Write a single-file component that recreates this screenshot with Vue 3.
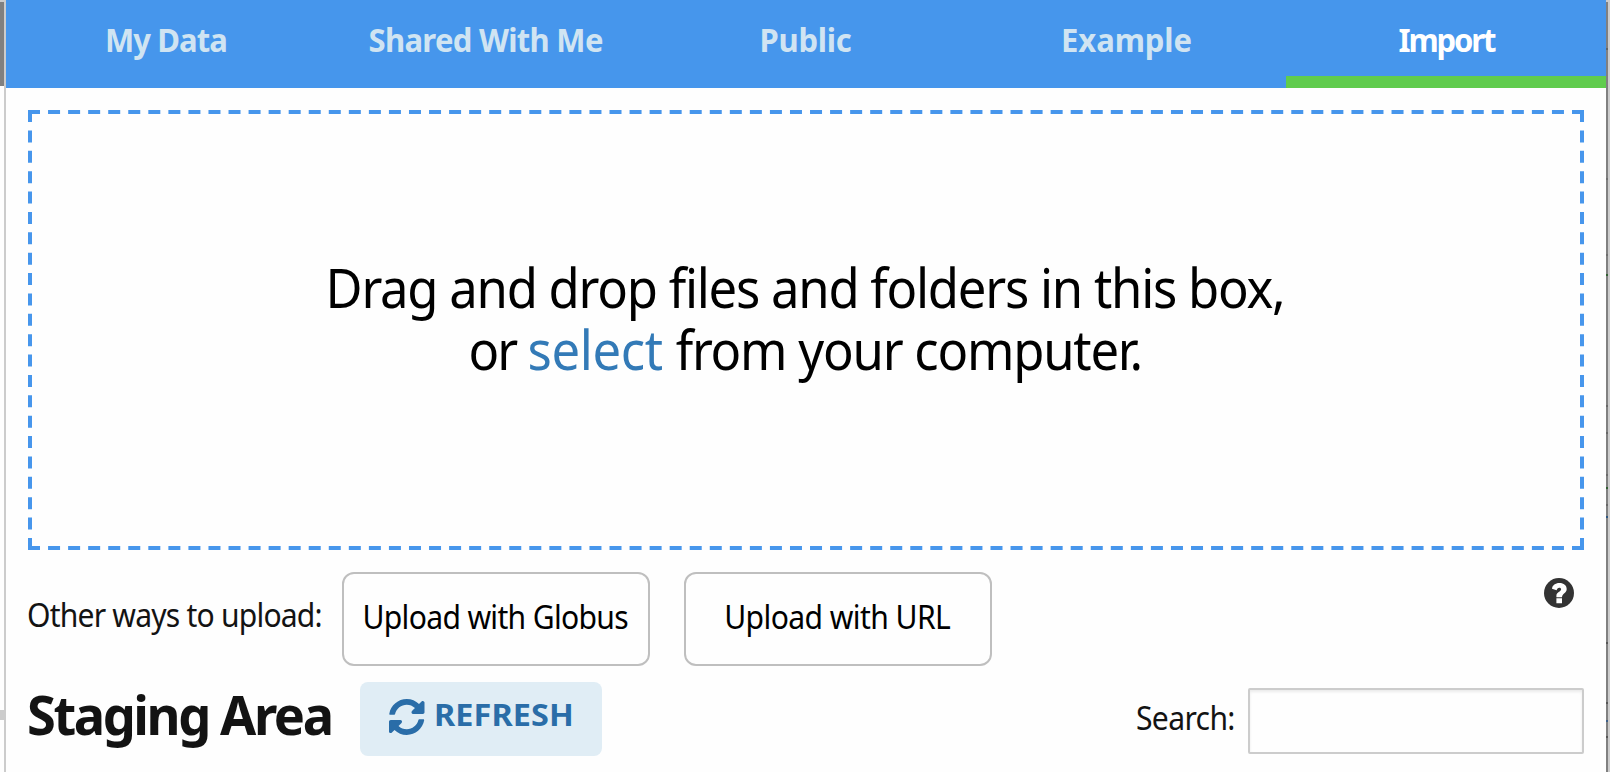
<script setup>
const tabs = [
  { label: 'My Data', tracking: -0.95 },
  { label: 'Shared With Me', tracking: -0.74 },
  { label: 'Public', tracking: -0.24 },
  { label: 'Example', tracking: -0.1 },
  { label: 'Import', tracking: -2.2, active: true },
]
const ticks = [
  { y: 46, c: '#636363' }, { y: 176, c: '#6d6d6d' }, { y: 252, c: '#6d6d6d' },
  { y: 272, c: '#315f31' }, { y: 403, c: '#666' }, { y: 430, c: '#666' },
  { y: 472, c: '#6a6a6a' }, { y: 485, c: '#315f31' }, { y: 502, c: '#666' },
  { y: 514, c: '#2d5580' }, { y: 640, c: '#555' }, { y: 700, c: '#555' },
  { y: 718, c: '#3d5f88' }, { y: 734, c: '#555' },
]
</script>

<template>
  <div class="page">
    <div class="edge-left">
      <div class="shade"></div>
      <div class="handle"></div>
    </div>
    <main class="panel">
      <nav class="tabs">
        <div v-for="t in tabs" :key="t.label" class="tab" :class="{ active: t.active }">
          <span class="cond bold" :style="{ letterSpacing: t.tracking + 'px' }">{{ t.label }}</span>
        </div>
      </nav>

      <section class="body">
        <div class="dropzone">
          <svg class="dashes" width="1556" height="440" viewBox="0 0 1556 440" fill="none" stroke="#4796ec" stroke-width="4">
            <path d="M0 2H1556M0 438H1556" stroke-dasharray="12 8.052" />
            <path d="M2 0V440M1554 0V440" stroke-dasharray="12 8.381" />
          </svg>
          <div class="line one">Drag and drop files and folders in this box,</div>
          <div class="line two"><span class="or">or </span><a class="select">select </a><span class="rest">from your computer.</span></div>
        </div>

        <div class="upload">
          <div class="other"><span class="cond left">Other ways to upload:</span></div>
          <button class="btn"><span class="cond globus">Upload with Globus</span></button>
          <button class="btn"><span class="cond url">Upload with URL</span></button>
          <svg class="help" width="30" height="30" viewBox="0 0 30 30">
            <circle cx="15" cy="15" r="15" fill="#333" />
            <path fill="#fff" d="M8 10.8C8.3 7.2 11.4 5 15.4 5C19.8 5 22.7 7.4 22.7 11C22.7 15.2 18.1 15.4 18 19.3H12.4V17.8C12.4 13.9 17.1 13.9 17.1 11.3C17.1 10.2 16.4 9.7 15.3 9.7C13.7 9.7 13.2 10.6 12.6 12.2ZM12.4 20.3H18V25.2H12.4Z" />
          </svg>
        </div>

        <div class="staging">
          <h1><span class="cond bold left">Staging Area</span></h1>
          <button class="refresh">
            <svg width="35.5" height="36" viewBox="8 8 496 496" preserveAspectRatio="none" fill="#2a6da8">
              <path d="M370.72 133.28C339.458 104.008 298.888 87.962 255.848 88c-77.458.068-144.328 53.178-162.791 126.85-1.344 5.363-6.122 9.15-11.651 9.15H24.103c-7.498 0-13.194-6.807-11.807-14.176C33.933 94.924 134.813 8 256 8c66.448 0 126.791 26.136 171.315 68.685L463.03 40.97C478.149 25.851 504 36.559 504 57.941V192c0 13.255-10.745 24-24 24H345.941c-21.382 0-32.09-25.851-16.971-40.971l41.75-41.749zM32 296h134.059c21.382 0 32.09 25.851 16.971 40.971l-41.75 41.75c31.262 29.273 71.835 45.319 114.876 45.28 77.418-.07 144.315-53.144 162.787-126.849 1.344-5.363 6.122-9.15 11.651-9.15h57.304c7.498 0 13.194 6.807 11.807 14.176C478.067 417.076 377.187 504 256 504c-66.448 0-126.791-26.136-171.315-68.685L48.97 471.03C33.851 486.149 8 475.441 8 454.059V320c0-13.255 10.745-24 24-24z" />
            </svg>
            <span class="refresh-text">REFRESH</span>
          </button>
          <label class="search">
            <span class="search-label"><span class="cond left">Search:</span></span>
            <input type="text" />
          </label>
        </div>
      </section>
    </main>
    <div class="edge-right">
      <i v-for="t in ticks" :key="t.y" :style="{ top: t.y + 'px', background: t.c }"></i>
    </div>
  </div>
</template>

<style>
body { margin: 0; overflow: hidden; background: #fefefe; }
</style>

<style scoped>
.page {
  display: flex;
  width: 1610px;
  height: 772px;
  overflow: hidden;
  background: #fefefe;
  font-family: "Noto Sans", "Open Sans", sans-serif;
  font-size: 32px;
  color: #131313;
}
.edge-left {
  box-sizing: border-box;
  width: 6px;
  border-right: 2px solid #ccc;
  display: flex;
  flex-direction: column;
}
.shade { height: 84px; border-top: 2px solid #ccc; background: #808080; }
.handle { margin-top: 624px; height: 10px; background: #ccc; }
.panel { width: 1600px; flex: none; }
.tabs { display: flex; height: 88px; background: #4696ec; }
.tab {
  box-sizing: border-box;
  width: 320px;
  height: 88px;
  text-align: center;
  line-height: 79px;
  font-weight: 700;
  color: #d0e4f2;
  white-space: nowrap;
}
.tab.active { color: #fff; border-bottom: 12px solid #60cc4d; }
.cond { display: inline-block; white-space: nowrap; transform: scaleX(.94); }
.cond.bold { transform: scaleX(.97); }
.cond.left { transform-origin: 0 50%; }
.body { padding: 22px 22px 0; }
.dropzone {
  position: relative;
  box-sizing: border-box;
  height: 440px;
  padding-top: 146px;
  display: flex;
  flex-direction: column;
  align-items: center;
}
.dashes { position: absolute; inset: 0; }
.line {
  font-size: 54px;
  line-height: 62px;
  color: #000;
  white-space: pre;
  transform: scaleX(.94);
}
.one { letter-spacing: -1.32px; margin-left: -2px; }
.or { letter-spacing: -2.07px; }
.select { letter-spacing: -.37px; color: #337ab7; }
.rest { letter-spacing: -1.3px; }
.two { margin-left: -1px; }
.upload { display: flex; margin-top: 22px; height: 94px; }
.other { width: 315px; margin-left: -1px; line-height: 85px; letter-spacing: -.85px; }
.btn {
  box-sizing: border-box;
  width: 308px;
  height: 94px;
  margin: 0 34px 0 0;
  padding: 0 2px 5px 0;
  border: 2px solid #bfbfbf;
  border-radius: 12px;
  background: transparent;
  font: inherit;
  line-height: 85px;
  color: #000;
  display: flex;
  justify-content: center;
}
.globus { letter-spacing: -.72px; }
.url { letter-spacing: -.62px; }
.help { margin: 6px 10px 0 auto; }
.staging { display: flex; margin-top: 16px; }
h1 {
  margin: 0 0 0 -1px;
  width: 333px;
  font-size: 54px;
  line-height: 64px;
  font-weight: 700;
  letter-spacing: -2.5px;
}
.refresh {
  box-sizing: border-box;
  width: 242px;
  height: 74px;
  margin: 0;
  padding: 0 0 0 29px;
  border: 0;
  border-radius: 8px;
  background: #e0edf5;
  color: #2a6da8;
  font: 700 31px/64px "Noto Sans", sans-serif;
  display: flex;
  align-items: flex-start;
  gap: 9px;
}
.refresh svg { margin-top: 17px; flex: none; }
.refresh-text { letter-spacing: .1px; transform: scaleX(1.045); transform-origin: 0 50%; }
.search { margin-left: auto; display: flex; }
.search-label { width: 112px; line-height: 71px; letter-spacing: -.68px; }
input {
  box-sizing: border-box;
  width: 336px;
  height: 66px;
  margin: 6px 0 0;
  border: 2px solid #ccc;
  border-radius: 2px;
  background: #fefefe;
  box-shadow: inset 0 2px 3px rgba(0, 0, 0, .08);
}
.edge-right {
  position: relative;
  box-sizing: border-box;
  width: 4px;
  flex: none;
  border-right: 2px solid #ccc;
  border-top: 2px solid #ccc;
  background: #808080;
}
.edge-right i { position: absolute; left: 0; width: 2px; height: 2px; }
</style>
